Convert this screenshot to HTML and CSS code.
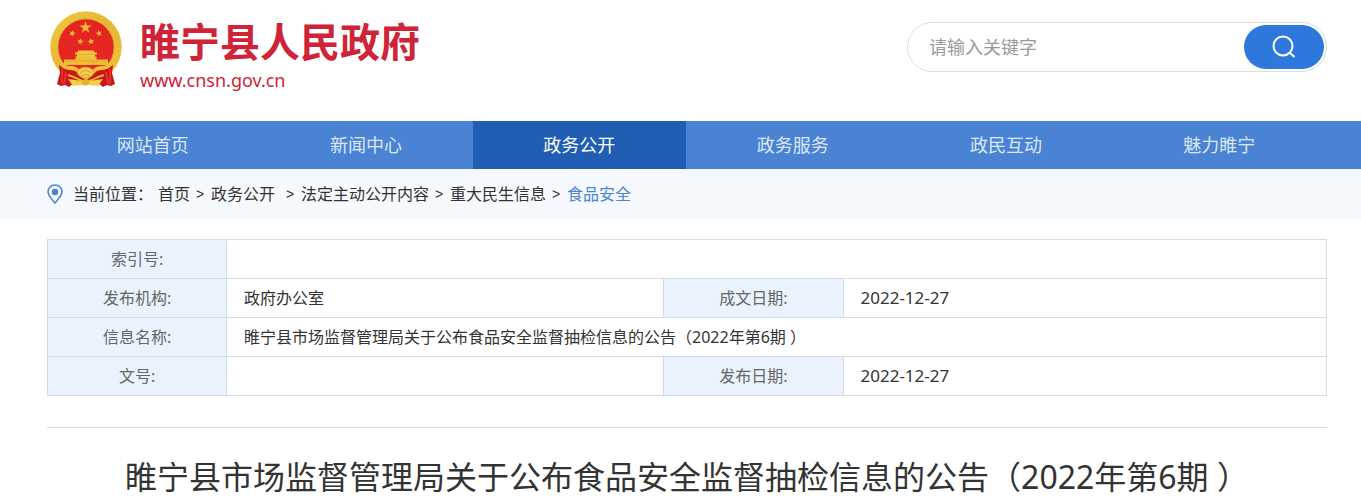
FILE: index.html
```html
<!DOCTYPE html>
<html lang="zh-CN">
<head>
<meta charset="utf-8">
<meta name="viewport" content="width=device-width, initial-scale=1">
<title>睢宁县人民政府</title>
<link rel="stylesheet" href="styles.css">
</head>
<body>
<header class="header wrap">
  <a class="brand" href="#">
    <svg class="emblem" viewBox="0 0 72 78" aria-hidden="true">
      <defs>
        <linearGradient id="gold" x1="0" y1="0" x2="1" y2="1">
          <stop offset="0" stop-color="#f3cb45"/>
          <stop offset="0.5" stop-color="#e9b834"/>
          <stop offset="1" stop-color="#f1c63e"/>
        </linearGradient>
        <path id="star" d="M0-6.500 1.500-2 6.200-2 2.400.8 3.800 5.300 0 2.500-3.800 5.300-2.400.8-6.200-2-1.500-2z"/>
      </defs>
      <circle cx="36" cy="36" r="35.800" fill="url(#gold)"/>
      <circle cx="36" cy="36" r="32" fill="none" stroke="#d99c1c" stroke-width="5" stroke-dasharray="1 2" opacity="0.2"/>
      <circle cx="36" cy="36" r="28" fill="#e42521" stroke="#d39a1d" stroke-width="0.8"/>
      <g fill="#f3bb35">
        <use href="#star" transform="translate(35.500 16.500)"/>
        <use href="#star" transform="translate(22.300 22.300) rotate(15) scale(.56)"/>
        <use href="#star" transform="translate(49 22.300) rotate(-15) scale(.56)"/>
        <use href="#star" transform="translate(30.300 30.500) rotate(12) scale(.56)"/>
        <use href="#star" transform="translate(41 30.500) rotate(-12) scale(.56)"/>
      </g>
      <path fill="#f5c93f" d="M28.500 39.500h15l1.500 2h2v2h-2v4H27v-4h-2v-2h2z"/>
      <path fill="#f0bd39" d="M25.500 45.500h21v3h11.500v5.500H14v-5.500h11.500z"/>
      <path d="M27 43.500h18M15 50h42" stroke="#cf9424" stroke-width="0.500"/>
      <path fill="#cb151b" d="M9 54q13 7 27 7t27-7l-1 8 3 11-4 2-4-1-4 2-5-4H24l-5 4-4-2-4 1-4-2 3-11z"/>
      <path d="M12 58v15M16 61l-2 12M60 58v15M56 61l2 12" stroke="#e8362e" stroke-width="1.600"/>
      <path d="M11 52q3 5 9 5 6 0 9 4l7 6 7-6q3-4 9-4 6 0 9-5" fill="none" stroke="#efbd38" stroke-width="4"/>
      <path d="M18 64q7 2 12 5l6 2 6-2q5-3 12-5" fill="none" stroke="#e8b22e" stroke-width="2"/>
      <ellipse cx="35.500" cy="61.500" rx="8" ry="5.500" fill="#f5cd49" stroke="#cf9424" stroke-width="0.700"/>
      <path d="M30 62q5.500-5 11 0M31 65q5-3 9 0" fill="none" stroke="#cf9424" stroke-width="0.800"/>
      <path d="m33 70-15-2 5 7 9-1zm5 0 15-2-5 7-9-1z" fill="#f3cc48"/>
      <ellipse cx="35.500" cy="71.500" rx="4" ry="3" fill="#e8b22e"/>
    </svg>
    <span class="brand-text">
      <span class="brand-name">睢宁县人民政府</span>
      <span class="brand-url">www.cnsn.gov.cn</span>
    </span>
  </a>
  <form class="search">
    <input class="search-input" type="text" placeholder="请输入关键字" aria-label="请输入关键字">
    <button class="search-button" type="button" aria-label="搜索">
      <svg class="search-icon" viewBox="0 0 24 24" aria-hidden="true"><circle cx="11" cy="11" r="9.500"/><path d="m17.500 17.500 5 4.500"/></svg>
    </button>
  </form>
</header>
<nav class="nav">
  <div class="nav-list">
    <a class="nav-item" href="#">网站首页</a>
    <a class="nav-item" href="#">新闻中心</a>
    <a class="nav-item active" href="#">政务公开</a>
    <a class="nav-item" href="#">政务服务</a>
    <a class="nav-item" href="#">政民互动</a>
    <a class="nav-item" href="#">魅力睢宁</a>
  </div>
</nav>
<div class="location">
  <div class="crumbs wrap">
    <svg class="pin" viewBox="0 0 16 20" aria-hidden="true"><path d="M8 1C4 1 1 4 1 7.800c0 4 4 7.500 7 11.200 3-3.700 7-7.200 7-11.200C15 4 12 1 8 1z"/><circle cx="8" cy="8" r="3.200"/></svg>
    <span class="crumb-label">当前位置：</span>
    <a href="#">首页</a><span class="sep">&gt;</span>
    <a class="section" href="#">政务公开</a><span class="sep">&gt;</span>
    <a href="#">法定主动公开内容</a><span class="sep">&gt;</span>
    <a href="#">重大民生信息</a><span class="sep">&gt;</span>
    <a class="current" href="#">食品安全</a>
  </div>
</div>
<main class="main wrap">
  <table class="info">
    <colgroup><col class="col-label"><col class="col-value"><col class="col-label"><col></colgroup>
    <tr><th scope="row">索引号:</th><td colspan="3"></td></tr>
    <tr><th scope="row">发布机构:</th><td>政府办公室</td><th scope="row">成文日期:</th><td class="date">2022-12-27</td></tr>
    <tr><th scope="row">信息名称:</th><td colspan="3">睢宁县市场监督管理局关于公布食品安全监督抽检信息的公告（2022年第6期 ）</td></tr>
    <tr><th scope="row">文号:</th><td></td><th scope="row">发布日期:</th><td class="date">2022-12-27</td></tr>
  </table>
  <h1 class="title">睢宁县市场监督管理局关于公布食品安全监督抽检信息的公告（2022年第6期 ）</h1>
</main>
</body>
</html>
```
FILE: styles.css
```css
* { box-sizing: border-box; }
body {
  margin: 0;
  background: #fff;
  color: #333;
  font: 16px/24px "Noto Sans", "Noto Sans CJK SC", sans-serif;
}
a { color: inherit; text-decoration: none; }
.wrap { padding-left: 47px; padding-right: 34px; }

.header {
  display: flex;
  justify-content: space-between;
  align-items: flex-start;
  height: 121px;
}
.brand {
  display: flex;
  gap: 18px;
  padding: 11px 0 0 3px;
  color: #cf2338;
}
.emblem { width: 72px; height: 78px; }
.brand-text { display: flex; flex-direction: column; padding-top: 7px; }
.brand-name { font-size: 40px; font-weight: 700; line-height: 48px; }
.brand-url { font-size: 18px; line-height: 28px; }

.search {
  display: flex;
  width: 420px;
  height: 50px;
  margin-top: 22px;
  padding: 2px;
  border: 1px solid #d3dfea;
  border-radius: 25px;
}
.search-input {
  flex: 1;
  min-width: 0;
  padding: 0 19px;
  border: 0;
  outline: 0;
  background: transparent;
  color: #333;
  font: inherit;
  font-size: 18px;
}
.search-input::placeholder { color: #999; opacity: 1; }
.search-button {
  display: flex;
  align-items: center;
  justify-content: center;
  width: 80px;
  height: 44px;
  padding: 0;
  border: 0;
  border-radius: 22px;
  background: #2e77dc;
}
.search-icon { width: 24px; height: 24px; fill: none; stroke: #fff; stroke-width: 2; }

.nav { background: #4a83d3; }
.nav-list {
  display: grid;
  grid-template-columns: repeat(6, 1fr);
  padding: 0 35px 0 46px;
}
.nav-item {
  color: #dce7f7;
  font-size: 18px;
  line-height: 48px;
  text-align: center;
}
.nav-item.active { background: #205eb3; color: #fff; }

.location { background: #f5f9fe; }
.crumbs { display: flex; align-items: center; gap: 6px; height: 50px; }
.pin { width: 16px; height: 20px; margin-right: 4px; fill: none; stroke: #4a83d3; stroke-width: 1.5; }
.pin circle { fill: #4a83d3; stroke: none; }
.crumb-label { margin-right: -1px; }
.sep { width: 9px; font-family: "Liberation Sans", sans-serif; font-size: 14px; }
.section { margin-right: 5px; }
.current { color: #4a83d3; }

.main { padding-top: 20px; }
.info {
  width: 100%;
  border-collapse: collapse;
  table-layout: fixed;
}
.col-label { width: 14%; }
.col-value { width: 34.2%; }
.info th, .info td {
  height: 39px;
  padding: 0 17px;
  border: 1px solid #d3dde9;
  text-align: left;
}
.info th { background: #eaf3fd; color: #666; font-weight: 400; text-align: center; }
.info .date { font-size: 17px; }
.title {
  margin: 31px 0 0;
  padding: 25px 0 0;
  border-top: 1px solid #d3dde9;
  font-size: 32px;
  font-weight: 400;
  line-height: 48px;
  text-align: center;
}
```
